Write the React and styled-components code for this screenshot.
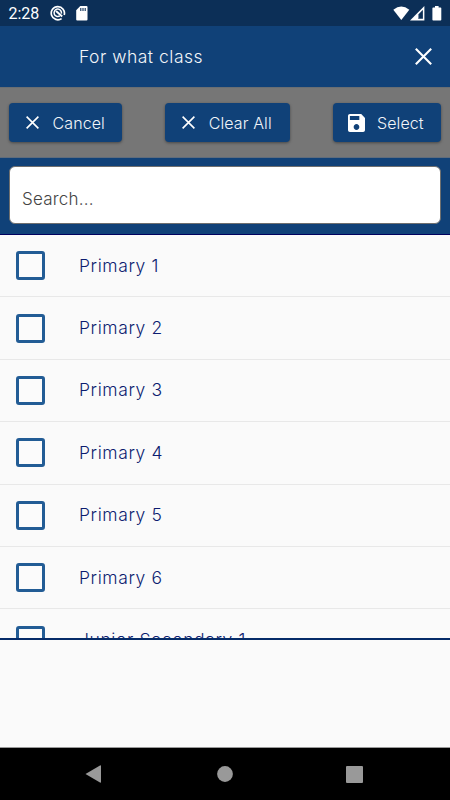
import React, { useState } from 'react';
import styled, { createGlobalStyle } from 'styled-components';

const classes = [
  'Primary 1',
  'Primary 2',
  'Primary 3',
  'Primary 4',
  'Primary 5',
  'Primary 6',
  'Junior Secondary 1',
]

const CloseIcon = ({ size }) => (
  <svg width={size} height={size} viewBox="0 0 17 17" fill="none" stroke="#fff" strokeWidth="2.1">
    <path d="M0.8 0.8L16.2 16.2M16.2 0.8L0.8 16.2" />
  </svg>
)

const SaveIcon = () => (
  <svg width="17" height="18" viewBox="3 3 18 18" preserveAspectRatio="none" fill="#fff">
    <path d="M17 3H5c-1.11 0-2 .9-2 2v14c0 1.1.89 2 2 2h14c1.1 0 2-.9 2-2V7l-4-4zm-5 16c-1.66 0-3-1.34-3-3s1.34-3 3-3 3 1.34 3 3-1.34 3-3 3zm3-10H5V5h10v4z" />
  </svg>
)

const StatusBar = () => (
  <StyStatusBar>
    <StyTime>2:28</StyTime>
    <StyStatusIcons>
      <svg width="16" height="16" viewBox="0 0 16 16" fill="none" stroke="#fff">
        <path d="M11.6 13.6A6.6 6.6 0 1 1 14.2 10" strokeWidth="1.7" />
        <path d="M9.8 10.9A3.7 3.7 0 1 1 11.4 8.6" strokeWidth="1.5" />
        <path d="M6 6L12.2 11.6" strokeWidth="2" />
      </svg>
      <svg width="12" height="15" viewBox="0 0 12 15">
        <path d="M4.3 0H10.5Q11.5 0 11.5 1V13.5Q11.5 14.5 10.5 14.5H1.2Q.2 14.5 .2 13.5V4.3Z" fill="#fff" />
        <path d="M4.8 2V5M7 2V5M9.2 2V5" stroke="#0c2f57" strokeWidth="1.1" />
      </svg>
    </StyStatusIcons>
    <StySignals>
      <svg width="17" height="15" viewBox="0 0 17 15" fill="#fff">
        <path d="M.3 3.7Q8.3-2.7 16.3 3.7L8.3 14Z" />
      </svg>
      <svg width="15" height="15" viewBox="0 0 15 15">
        <path d="M14.4 0V14.5H0Z" fill="#fff" />
        <path d="M12.9 3.8V12.8H8.1V8.8Z" fill="#0c2f57" />
        <path d="M8.6 8.3V12.8" stroke="#8397ad" strokeWidth="1" />
      </svg>
      <svg width="10" height="15" viewBox="0 0 10 15" fill="#fff">
        <path d="M3 0H6.6V1.4H8.5Q9.3 1.4 9.3 2.2V13.7Q9.3 14.5 8.5 14.5H1.2Q.4 14.5 .4 13.7V2.2Q.4 1.4 1.2 1.4H3Z" />
      </svg>
    </StySignals>
  </StyStatusBar>
)

const ClassRow = ({ name, checked, onToggle }) => (
  <StyRow onClick={onToggle}>
    <StyCheckbox $checked={checked} />
    <StyRowLabel>{name}</StyRowLabel>
  </StyRow>
)

export default function App() {
  const [selected, setSelected] = useState([])
  const [search, setSearch] = useState('')

  const toggle = (name) => {
    setSelected(selected.includes(name) ? selected.filter(n => n !== name) : [...selected, name])
  }
  const shown = classes.filter(n => n.toLowerCase().includes(search.toLowerCase()))

  return (
    <StyScreen>
      <GlobalStyle />
      <StatusBar />
      <StyHeader>
        <StyTitle>For what class</StyTitle>
        <CloseIcon size={17} />
      </StyHeader>
      <StyToolbar>
        <StyButton $width="113px">
          <CloseIcon size={13} />
          <span>Cancel</span>
        </StyButton>
        <StyButton $width="124.5px" onClick={() => setSelected([])}>
          <CloseIcon size={13} />
          <span>Clear All</span>
        </StyButton>
        <StyButton $width="108px" $gap="12px">
          <SaveIcon />
          <span>Select</span>
        </StyButton>
      </StyToolbar>
      <StySearchPanel>
        <StySearch placeholder="Search..." value={search} onChange={e => setSearch(e.target.value)} />
      </StySearchPanel>
      <StyList>
        {shown.map(name => (
          <ClassRow key={name} name={name} checked={selected.includes(name)} onToggle={() => toggle(name)} />
        ))}
      </StyList>
      <StyFiller />
      <StyNavBar>
        <svg width="17" height="18" viewBox="0 0 17 18" fill="#999">
          <path d="M.5 9L15 .5Q16 0 16 1V17Q16 18 15 17.5Z" />
        </svg>
        <svg width="17" height="16" viewBox="0 0 17 16" fill="#999">
          <circle cx="9" cy="8" r="7.9" />
        </svg>
        <svg width="17" height="17" viewBox="0 0 17 17" fill="#999">
          <rect width="17" height="17" rx="1" />
        </svg>
      </StyNavBar>
    </StyScreen>
  );
}

// Styled Components

const GlobalStyle = createGlobalStyle`
  * {
    box-sizing: border-box;
  }
  body {
    margin: 0;
    overflow: hidden;
  }
  svg {
    display: block;
    flex: none;
  }
`

const StyScreen = styled.main`
  width: 450px;
  height: 800px;
  display: flex;
  flex-direction: column;
  background: #fafafa;
  font-family: Inter, sans-serif;
  font-weight: 300;
`

const StyStatusBar = styled.div`
  flex: none;
  height: 26px;
  padding: 0 8px;
  display: flex;
  align-items: center;
  background: #0c2f57;
`

const StyTime = styled.span`
  width: 42px;
  color: #fff;
  font-family: Roboto, sans-serif;
  font-weight: 400;
  font-size: 16px;
  line-height: 18px;
  padding: 2px 0 0 0.5px;
`

const StyStatusIcons = styled.div`
  flex: 1;
  display: flex;
  align-items: center;
  gap: 10px;
`

const StySignals = styled.div`
  display: flex;
  align-items: center;

  svg:last-child {
    margin-left: 7px;
  }
`

const StyHeader = styled.header`
  flex: none;
  height: 61px;
  padding: 0 18px 0 79px;
  display: flex;
  align-items: center;
  justify-content: space-between;
  background: #104178;
`

const StyTitle = styled.h1`
  margin: 0;
  color: #f2f5f9;
  font-size: 17.5px;
  font-weight: 300;
  letter-spacing: 0.5px;
`

const StyToolbar = styled.div`
  flex: none;
  height: 71px;
  padding: 0 9px;
  display: flex;
  align-items: center;
  justify-content: space-between;
  background: #767676;
  border-top: 1px solid #696e73;
  border-bottom: 1px solid #5f6c7c;
`

const StyButton = styled.button`
  width: ${props => props.$width};
  height: 39px;
  padding: 0 0 0 ${props => (props.$gap ? '15px' : '17px')};
  display: flex;
  align-items: center;
  gap: ${props => props.$gap || '13.5px'};
  border: 0;
  border-radius: 4px;
  background: #104178;
  box-shadow: 0 1px 3px rgba(0, 0, 0, 0.4);
  color: #f2f5f9;
  font-family: inherit;
  font-size: 16px;
  font-weight: 300;
  letter-spacing: 0.1px;
  white-space: nowrap;
`

const StySearchPanel = styled.div`
  flex: none;
  height: 77px;
  padding: 8px 9px 0;
  background: #104178;
  border-bottom: 1px solid #00005e;
`

const StySearch = styled.input`
  display: block;
  width: 100%;
  height: 58px;
  padding: 7px 12px 0;
  border: 1px solid #6f6f6f;
  border-radius: 6px;
  outline: 0;
  background: #fff;
  color: #333;
  font-family: inherit;
  font-weight: 300;
  font-size: 17px;
  letter-spacing: 0.2px;

  &::placeholder {
    color: #444;
    opacity: 1;
  }
`

const StyList = styled.div`
  flex: none;
  height: 405px;
  overflow: hidden;
  border-bottom: 2px solid #052b68;
`

const StyRow = styled.div`
  height: 62.4px;
  padding-left: 16px;
  display: flex;
  align-items: center;
  gap: 34px;
  border-bottom: 1px solid #e8e8e8;
`

const StyCheckbox = styled.span`
  flex: none;
  width: 29px;
  height: 29px;
  border: 3px solid #225c95;
  border-radius: 3px;
  background: ${props => (props.$checked ? '#225c95' : '#fbfbfb')};
`

const StyRowLabel = styled.span`
  color: #0c1c70;
  font-size: 17.5px;
  line-height: 20px;
  letter-spacing: 0.6px;
`

const StyFiller = styled.div`
  flex: 1;
`

const StyNavBar = styled.nav`
  flex: none;
  height: 53px;
  padding: 0 87px 0 85px;
  display: flex;
  align-items: center;
  justify-content: space-between;
  background: #000;
  border-top: 1px solid #999;
`
